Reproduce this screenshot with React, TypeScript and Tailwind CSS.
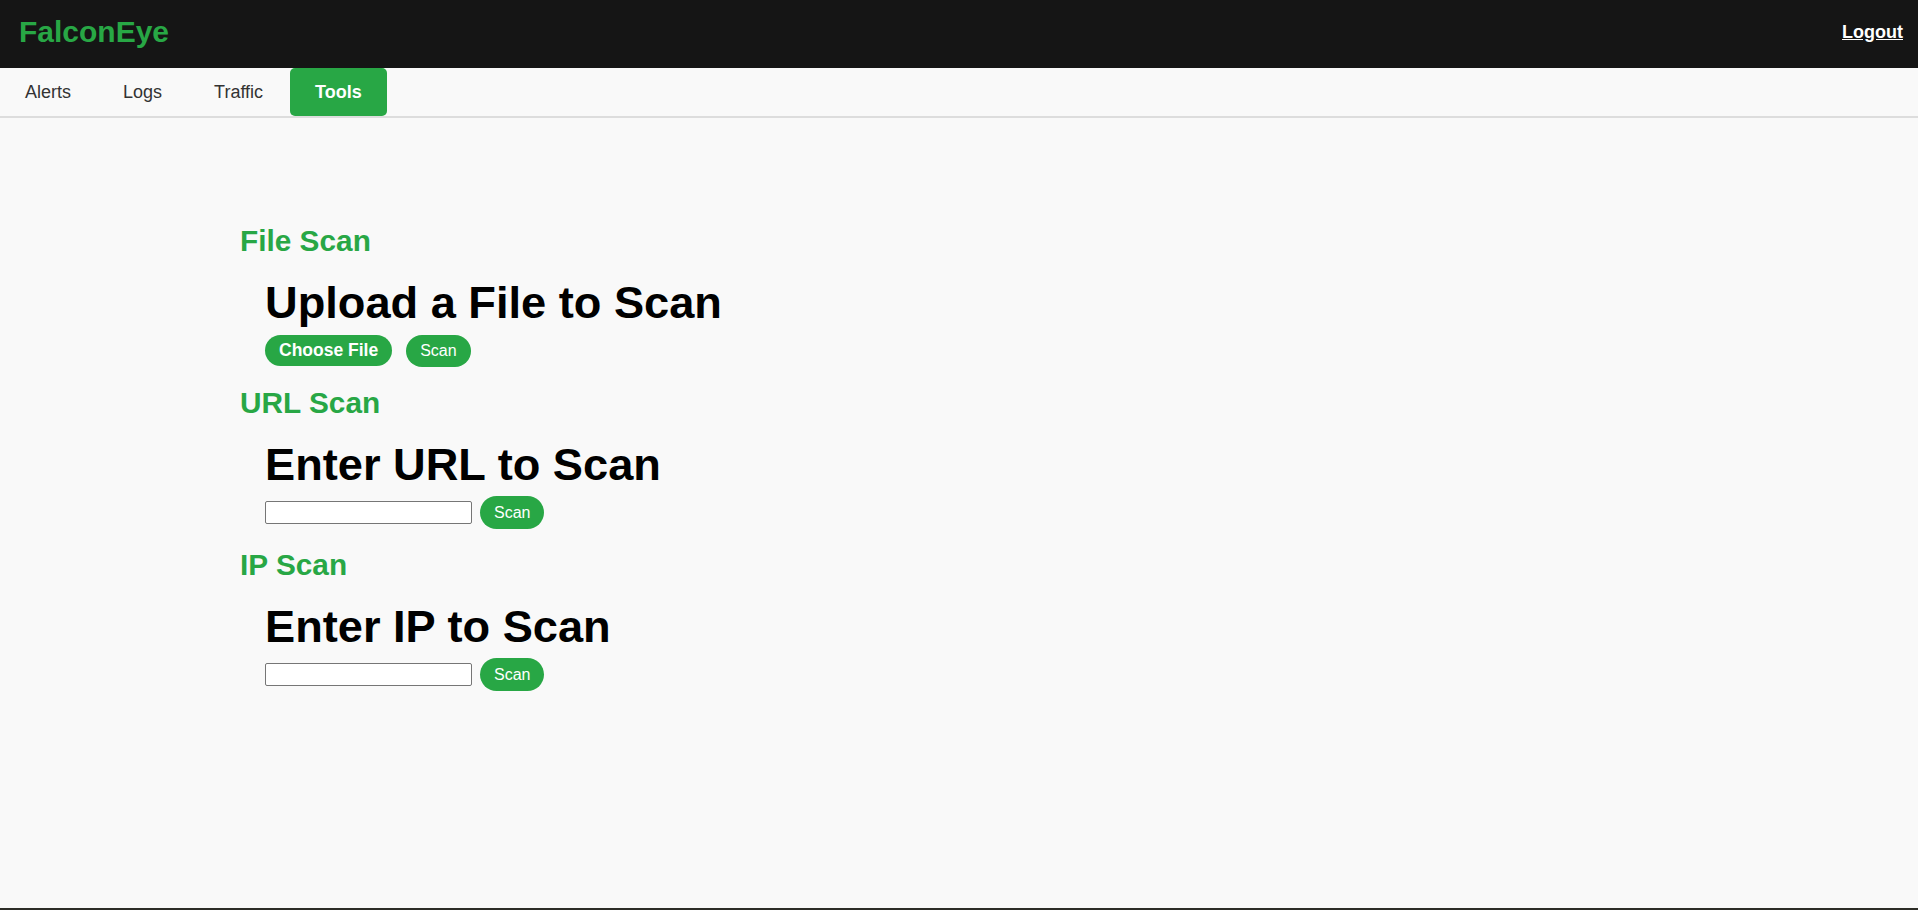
import React from "react";

function ScanButton({ h }: { h: string }) {
  return (
    <button
      className={`${h} px-[14px] rounded-full bg-[#28a745] text-white text-[16px] leading-none flex items-center`}
    >
      Scan
    </button>
  );
}

function Section({ title, children }: { title: string; children: React.ReactNode }) {
  return (
    <section>
      <h3 className="text-[29.8px] leading-[34px] font-bold text-[#28a745]">{title}</h3>
      {children}
    </section>
  );
}

export default function App() {
  return (
    <div
      className="w-full h-[910px] flex flex-col bg-[#f9f9f9] overflow-hidden"
      style={{ fontFamily: '"Liberation Sans", Arial, sans-serif' }}
    >
      <header className="h-[68px] shrink-0 bg-[#151515] flex items-center justify-between pl-[19px] pr-[15px] pb-[4px]">
        <div className="text-[30px] leading-[34px] font-bold text-[#28a745]">FalconEye</div>
        <a className="text-[18px] leading-[22px] font-bold text-white underline cursor-pointer">Logout</a>
      </header>

      <nav className="h-[50px] shrink-0 bg-[#f9f9f9] border-b-2 border-[#dddddd] flex items-stretch gap-[2px]">
        <a className="px-[25px] flex items-center text-[18px] text-[#333333]">Alerts</a>
        <a className="px-[25px] flex items-center text-[18px] text-[#333333]">Logs</a>
        <a className="px-[25px] flex items-center text-[18px] text-[#333333]">Traffic</a>
        <a className="px-[25px] flex items-center text-[18px] font-bold text-white bg-[#28a745] rounded-[5px]">
          Tools
        </a>
      </nav>

      <main className="pl-[240px] pt-[106px] flex flex-col gap-[19px]">
        <Section title="File Scan">
          <h2 className="mt-[19px] ml-[25px] text-[45.2px] leading-[51px] font-bold text-black">
            Upload a File to Scan
          </h2>
          <div className="mt-[6px] ml-[25px] h-[33px] flex items-center gap-[14px]">
            <label className="h-[31px] px-[14px] rounded-full bg-[#28a745] text-white text-[17.5px] font-bold leading-none flex items-center cursor-pointer">
              Choose File
            </label>
            <ScanButton h="h-[32px]" />
          </div>
        </Section>

        <Section title="URL Scan">
          <h2 className="mt-[19px] ml-[25px] text-[45.2px] leading-[51px] font-bold text-black">
            Enter URL to Scan
          </h2>
          <div className="mt-[6px] ml-[25px] h-[33px] flex items-center gap-[8px]">
            <input
              type="text"
              className="w-[207px] h-[23px] bg-white border border-[#767676] rounded-[2px] outline-none"
            />
            <ScanButton h="h-[33px]" />
          </div>
        </Section>

        <Section title="IP Scan">
          <h2 className="mt-[19px] ml-[25px] text-[45.2px] leading-[51px] font-bold text-black">
            Enter IP to Scan
          </h2>
          <div className="mt-[6px] ml-[25px] h-[33px] flex items-center gap-[8px]">
            <input
              type="text"
              className="w-[207px] h-[23px] bg-white border border-[#767676] rounded-[2px] outline-none"
            />
            <ScanButton h="h-[33px]" />
          </div>
        </Section>
      </main>

      <footer className="mt-auto h-[2px] shrink-0 bg-[#2d2d27]" />
    </div>
  );
}
